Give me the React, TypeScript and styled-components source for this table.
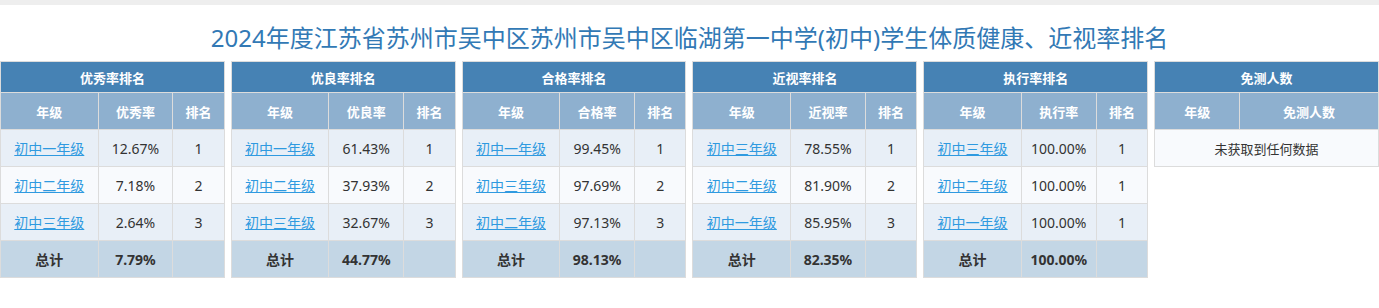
import React from "react";
import styled, { createGlobalStyle } from "styled-components";

const GlobalStyle = createGlobalStyle`
  html, body {
    margin: 0;
    padding: 0;
    background: #fff;
    font-family: "Noto Sans", "Noto Sans CJK SC", sans-serif;
    color: #333;
  }
`;

const TopBar = styled.div`
  height: 5px;
  background: #eeeeee;
`;

const PageTitle = styled.h1`
  margin: 0;
  padding: 16px 0 6px;
  line-height: 34px;
  font-size: 24px;
  font-weight: 400;
  text-align: center;
  color: #3279b5;
`;

const PanelGrid = styled.div`
  display: grid;
  grid-template-columns: repeat(6, 1fr);
  gap: 6px;
`;

const Table = styled.table`
  width: 100%;
  border-collapse: collapse;
  table-layout: fixed;
  font-size: 14px;
  text-align: center;

  td,
  th {
    border: 1px solid #dcdcdc;
    padding: 0;
  }
`;

const Col = styled.col<{ $w?: string }>`
  width: ${(p) => p.$w || "auto"};
`;

const CaptionCell = styled.th`
  height: 30px;
  background: #4682b4;
  color: #fff;
  font-size: 13px;
  font-weight: 700;
`;

const HeadCell = styled.th`
  height: 36px;
  background: #8eb0cf;
  color: #fff;
  font-size: 13px;
  font-weight: 700;
`;

const BodyRow = styled.tr<{ $odd: boolean }>`
  background: ${(p) => (p.$odd ? "#e8eff7" : "#f8fafd")};
  td {
    height: 36px;
  }
`;

const TotalRow = styled.tr`
  background: #c3d6e5;
  td {
    height: 36px;
    font-weight: 700;
    color: #333;
  }
`;

const GradeLink = styled.a`
  color: #2f9ae0;
  text-decoration: underline;
  cursor: pointer;
`;

const EmptyCell = styled.td`
  height: 36px;
  background: #f8fafd;
  font-size: 13px;
`;

type Row = { grade: string; rate: string; rank: number };

type Ranking = {
  title: string;
  rateName: string;
  rows: Row[];
  total: string;
};

const rankings: Ranking[] = [
  {
    title: "优秀率排名",
    rateName: "优秀率",
    rows: [
      { grade: "初中一年级", rate: "12.67%", rank: 1 },
      { grade: "初中二年级", rate: "7.18%", rank: 2 },
      { grade: "初中三年级", rate: "2.64%", rank: 3 },
    ],
    total: "7.79%",
  },
  {
    title: "优良率排名",
    rateName: "优良率",
    rows: [
      { grade: "初中一年级", rate: "61.43%", rank: 1 },
      { grade: "初中二年级", rate: "37.93%", rank: 2 },
      { grade: "初中三年级", rate: "32.67%", rank: 3 },
    ],
    total: "44.77%",
  },
  {
    title: "合格率排名",
    rateName: "合格率",
    rows: [
      { grade: "初中一年级", rate: "99.45%", rank: 1 },
      { grade: "初中三年级", rate: "97.69%", rank: 2 },
      { grade: "初中二年级", rate: "97.13%", rank: 3 },
    ],
    total: "98.13%",
  },
  {
    title: "近视率排名",
    rateName: "近视率",
    rows: [
      { grade: "初中三年级", rate: "78.55%", rank: 1 },
      { grade: "初中二年级", rate: "81.90%", rank: 2 },
      { grade: "初中一年级", rate: "85.95%", rank: 3 },
    ],
    total: "82.35%",
  },
  {
    title: "执行率排名",
    rateName: "执行率",
    rows: [
      { grade: "初中三年级", rate: "100.00%", rank: 1 },
      { grade: "初中二年级", rate: "100.00%", rank: 1 },
      { grade: "初中一年级", rate: "100.00%", rank: 1 },
    ],
    total: "100.00%",
  },
];

const RankingTable = ({ data }: { data: Ranking }) => (
  <Table>
    <colgroup>
      <Col $w="43.6%" />
      <Col $w="33.4%" />
      <Col />
    </colgroup>
    <thead>
      <tr>
        <CaptionCell colSpan={3}>{data.title}</CaptionCell>
      </tr>
      <tr>
        <HeadCell>年级</HeadCell>
        <HeadCell>{data.rateName}</HeadCell>
        <HeadCell>排名</HeadCell>
      </tr>
    </thead>
    <tbody>
      {data.rows.map((row, i) => (
        <BodyRow key={i} $odd={i % 2 === 0}>
          <td>
            <GradeLink>{row.grade}</GradeLink>
          </td>
          <td>{row.rate}</td>
          <td>{row.rank}</td>
        </BodyRow>
      ))}
      <TotalRow>
        <td>总计</td>
        <td>{data.total}</td>
        <td></td>
      </TotalRow>
    </tbody>
  </Table>
);

// 免测人数 - 暂无数据
const ExemptTable = () => (
  <Table>
    <colgroup>
      <Col $w="38%" />
      <Col />
    </colgroup>
    <thead>
      <tr>
        <CaptionCell colSpan={2}>免测人数</CaptionCell>
      </tr>
      <tr>
        <HeadCell>年级</HeadCell>
        <HeadCell>免测人数</HeadCell>
      </tr>
    </thead>
    <tbody>
      <tr>
        <EmptyCell colSpan={2}>未获取到任何数据</EmptyCell>
      </tr>
    </tbody>
  </Table>
);

const App = () => {
  return (
    <>
      <GlobalStyle />
      <TopBar />
      <PageTitle>
        2024年度江苏省苏州市吴中区苏州市吴中区临湖第一中学(初中)学生体质健康、近视率排名
      </PageTitle>
      <PanelGrid>
        {rankings.map((r) => (
          <div key={r.title}>
            <RankingTable data={r} />
          </div>
        ))}
        <div>
          <ExemptTable />
        </div>
      </PanelGrid>
    </>
  );
};

export default App;
